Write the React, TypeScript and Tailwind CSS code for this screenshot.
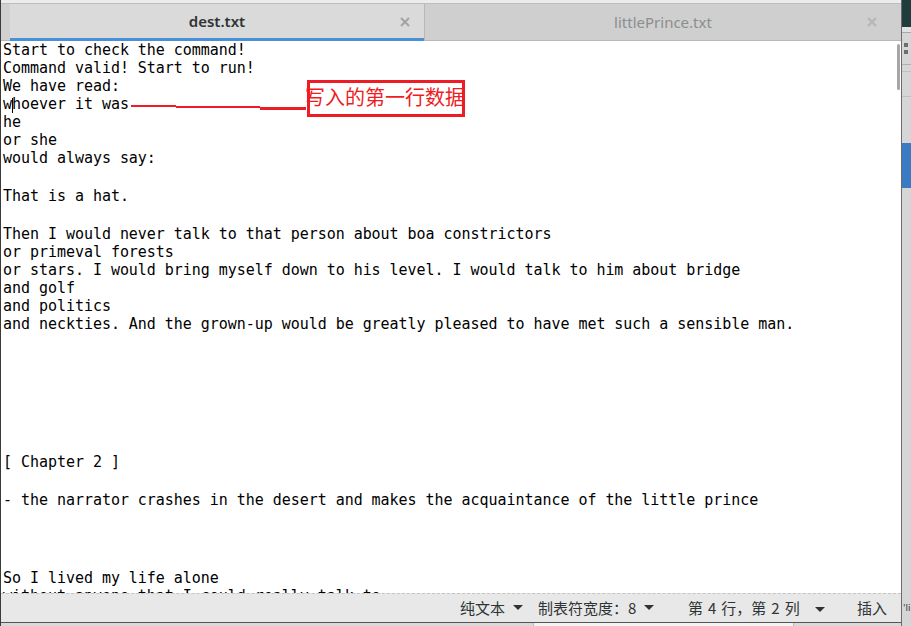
import React from "react";

const lines: string[] = [
  "Start to check the command!",
  "Command valid! Start to run!",
  "We have read:",
  "whoever it was",
  "he",
  "or she",
  "would always say:",
  "",
  "That is a hat.",
  "",
  "Then I would never talk to that person about boa constrictors",
  "or primeval forests",
  "or stars. I would bring myself down to his level. I would talk to him about bridge",
  "and golf",
  "and politics",
  "and neckties. And the grown-up would be greatly pleased to have met such a sensible man.",
  "",
  "",
  "",
  "",
  "",
  "",
  "[ Chapter 2 ]",
  "",
  "- the narrator crashes in the desert and makes the acquaintance of the little prince",
  "",
  "",
  "",
  "So I lived my life alone",
  "without anyone that I could really talk to",
];

const Arrow = () => (
  <svg width="10" height="6" viewBox="0 0 10 6" className="ml-[8px] inline-block">
    <path d="M0 0 L10 0 L5 5 Z" fill="#2e3436" />
  </svg>
);

const CloseX = ({ color }: { color: string }) => (
  <svg width="10" height="10" viewBox="0 0 10 10">
    <path d="M1 1 L9 9 M9 1 L1 9" stroke={color} strokeWidth="2" />
  </svg>
);

const Tab = ({ title, active }: { title: string; active?: boolean }) => (
  <div
    className={
      active
        ? "relative flex w-[414px] items-center justify-center border-b-[3px] border-[#4a90d9] bg-[#dadada]"
        : "relative flex flex-1 items-center justify-center border-b border-l border-[#b8b8b8] bg-[#cfcfcf]"
    }
  >
    <span
      className={
        active
          ? "text-[15px] font-semibold text-[#2e3436]"
          : "text-[15px] text-[#8b8e8f]"
      }
      style={{ fontFamily: '"Noto Sans", sans-serif' }}
    >
      {title}
    </span>
    <span className={active ? "absolute right-[14px] top-[13px]" : "absolute right-[24px] top-[13px]"}>
      <CloseX color={active ? "#a3a3a3" : "#b5b5b5"} />
    </span>
  </div>
);

export default function App() {
  return (
    <div className="flex h-[626px] w-[911px] overflow-hidden bg-white">
      {/* editor window */}
      <div className="flex w-[901px] flex-col border-l border-[#3a3a3a]">
        <div className="h-[4px] border-b border-[#bdbdbd] bg-[#ececec]" />
        <div className="flex h-[37px]">
          <div className="w-[9px] bg-[#d0d0d0] border-b border-[#b8b8b8]" />
          <Tab title="dest.txt" active />
          <Tab title="littlePrince.txt" />
        </div>

        <div className="relative h-[552px] overflow-hidden bg-white">
          <div
            className="pl-[2px] text-[15px] tracking-[-0.04px] text-black"
            style={{ fontFamily: '"DejaVu Sans Mono", monospace' }}
          >
            {lines.map((l, i) =>
              l === "" ? (
                <div key={i} className="h-[20px]" />
              ) : (
                <div key={i} className="h-[18px] whitespace-pre leading-[18px]">
                  {l}
                </div>
              )
            )}
          </div>

          {/* text cursor */}
          <div className="absolute left-[11px] top-[57px] h-[15px] w-px bg-black" />

          {/* annotation */}
          <div className="absolute left-[130px] top-[64px] h-[2px] w-[45px] bg-[#ee1c25]" />
          <div className="absolute left-[175px] top-[65px] h-[2px] w-[84px] bg-[#ee1c25]" />
          <div className="absolute left-[259px] top-[66px] h-[3px] w-[46px] bg-[#ee1c25]" />
          <div className="absolute left-[306px] top-[39px] h-[37px] w-[158px] border-[3px] border-[#ee1c25]" />
          <div
            className="absolute left-[304px] top-[43px] text-[20px] leading-[26px] text-[#ee1c25]"
            style={{ fontFamily: '"Noto Sans CJK SC", sans-serif' }}
          >
            写入的第一行数据
          </div>

          {/* scrollbar */}
          <div className="absolute right-[1px] top-[3px] h-[46px] w-[3px] rounded-sm bg-[#a6a6a6]" />
        </div>

        <div
          className="flex h-[29px] items-center border-t border-dashed border-[#c4c4c4] bg-[#e8e8e8] text-[15px] text-[#2e3436]"
          style={{ fontFamily: '"Noto Sans CJK SC", sans-serif' }}
        >
          <div className="flex-1" />
          <div className="flex w-[78px] items-center">
            纯文本
            <Arrow />
          </div>
          <div className="flex w-[150px] items-center">
            制表符宽度：8
            <Arrow />
          </div>
          <div className="flex w-[169px] items-center">
            <span>
              第<span className="mx-[5px]">4</span>行，第<span className="mx-[5px]">2</span>列
            </span>
            <span className="ml-[7px]">
              <Arrow />
            </span>
          </div>
          <div className="w-[44px]">插入</div>
        </div>
        <div className="flex h-[4px] border-t border-[#555] bg-[#d9d9d9]">
          <div className="ml-[532px] w-[261px] border-x border-[#bdbdbd] bg-[#f3f3f3]" />
        </div>
      </div>

      {/* window behind */}
      <div className="flex w-[10px] flex-col border-l border-[#6b6b6b] bg-[#d6d6d6]">
        <div className="h-[27px] bg-[#213c3c]" />
        <div className="h-[6px] border-b border-[#a8a8a8] bg-[#e2e2e2]" />
        <div className="mt-[10px] h-[4px] w-[4px] ml-[2px] bg-[#6e6e6e]" />
        <div className="mt-[3px] h-[4px] w-[4px] ml-[2px] bg-[#6e6e6e]" />
        <div className="mt-[10px] h-px bg-[#b0b0b0]" />
        <div className="mt-[6px] h-px bg-[#c0c0c0]" />
        <div className="mt-[24px] h-px bg-[#c0c0c0]" />
        <div className="mt-[46px] h-[45px] bg-[#3b7bc4]" />
        <div className="flex-1" />
        <div
          className="mb-[11px] ml-px whitespace-pre text-[9px] leading-[14px] text-[#2e3436]"
          style={{ fontFamily: '"DejaVu Sans", sans-serif' }}
        >
          'li
        </div>
      </div>
    </div>
  );
}
